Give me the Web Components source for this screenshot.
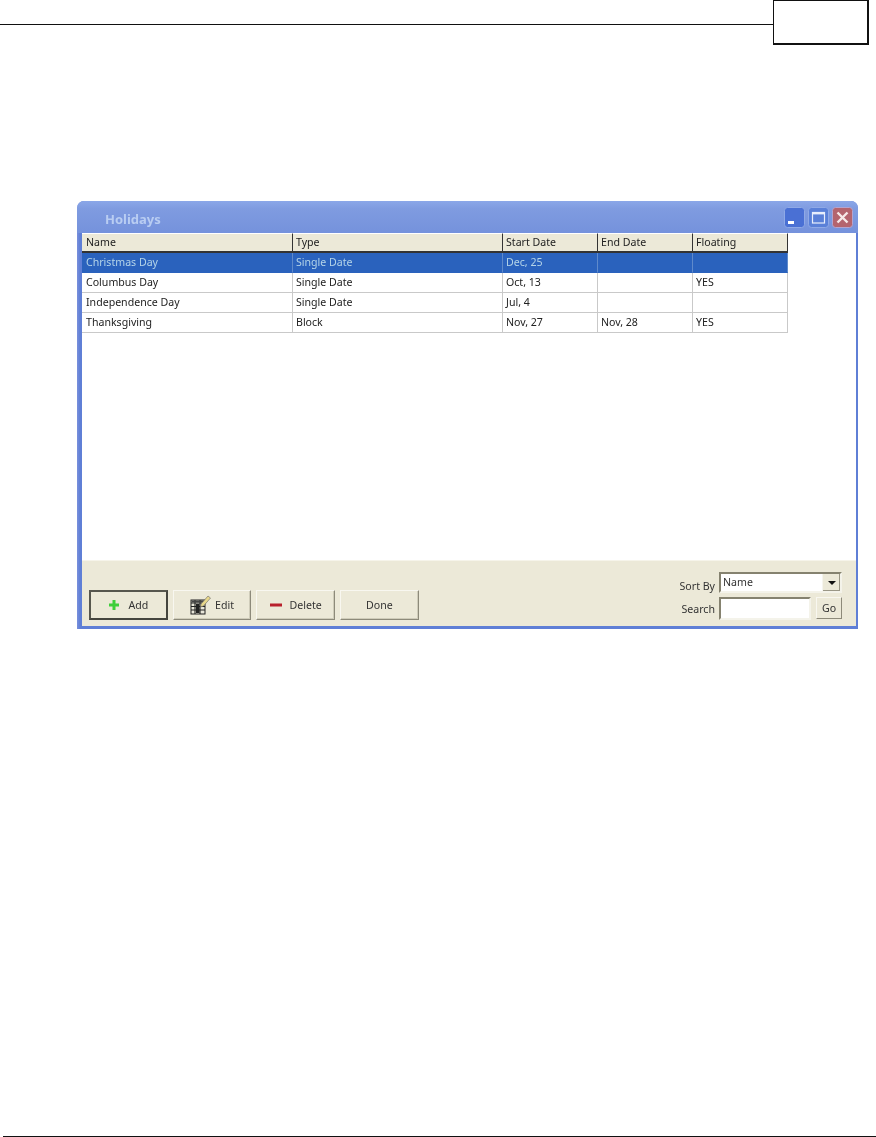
<!DOCTYPE html>
<html><head><meta charset="utf-8"><title>Holidays</title>
<style>
html,body{margin:0;padding:0;background:#fff}
body{width:876px;height:1137px;overflow:hidden;display:flex;flex-direction:column;font-family:"Noto Sans","Liberation Sans",sans-serif}
xp-window{margin:157px 0 0 77px}
page-footer{margin-top:auto}
</style></head><body>
<page-header></page-header>
<xp-window title="Holidays">
  <holiday-table></holiday-table>
  <tool-bar></tool-bar>
</xp-window>
<page-footer></page-footer>
<script>
const def=(name,html,init)=>customElements.define(name,class extends HTMLElement{
  constructor(){super();this.attachShadow({mode:'open'}).innerHTML=html;}
  connectedCallback(){init&&init(this)}
});
const F='10.6px "Noto Sans","Liberation Sans",sans-serif';
def('page-header',`<style>
:host{display:flex;height:44px;align-items:flex-start;flex:none}
.l{width:773px;height:25px;border-bottom:1px solid #111;box-sizing:border-box}
.b{width:96px;height:45px;box-sizing:border-box;border:1px solid #111;border-width:1px 2px 2px 1.5px}
</style><div class="l"></div><div class="b"></div>`);
def('page-footer',`<style>
:host{display:block;height:1px;margin-left:3px;background:#111;flex:none}
</style>`);
def('xp-window',`<style>
:host{display:block;width:781px;height:428px;box-sizing:border-box;flex:none;background:linear-gradient(90deg,#7a90dc,#5f7fd6 3px);border-radius:7px 7px 0 0;padding:0 2px 3px 5px;font:${F};filter:blur(.3px)}
.t{height:32px;box-sizing:border-box;display:flex;align-items:center;justify-content:space-between;padding:0 5px 0 28px;margin:0 -2px 0 -5px;border-radius:7px 7px 0 0;background:linear-gradient(#8ba7e8 0,#7f9be0 25%,#7592dc 100%)}
.n{font:bold 13px "Noto Sans","Liberation Sans",sans-serif;color:#b9cdf2;padding-top:4px}
.c{display:flex;gap:3px;margin-top:1px}
.c svg{display:block}
.body{height:393px;display:flex;flex-direction:column;background:#ece9d8}
</style>
<div class="t"><span class="n"></span><div class="c">
<svg width="21" height="21" viewBox="0 0 21 21"><rect x=".5" y=".5" width="20" height="20" rx="3" fill="#4a70d4" stroke="#8fa9e6"/><rect x="4" y="14" width="6" height="3" fill="#fff"/></svg>
<svg width="21" height="21" viewBox="0 0 21 21"><rect x=".5" y=".5" width="20" height="20" rx="3" fill="#5a80d8" stroke="#8fa9e6"/><rect x="4.500" y="5.500" width="12" height="10.500" fill="none" stroke="#e8eefc" stroke-width="1.200"/><rect x="4" y="5" width="13" height="2.400" fill="#e8eefc"/></svg>
<svg width="21" height="21" viewBox="0 0 21 21"><rect x=".5" y=".5" width="20" height="20" rx="3" fill="#b4646e" stroke="#b3a4cf"/><path d="M5.500 5.500 15.500 15.500M15.500 5.500 5.500 15.500" stroke="#f6e8e8" stroke-width="2.400"/></svg>
</div></div><div class="body"><slot></slot></div>`,el=>{el.shadowRoot.querySelector('.n').textContent=el.getAttribute('title')});
def('holiday-table',`<style>
:host{display:block;height:328px;flex:none;background:#fff;box-sizing:border-box;border-bottom:1px solid #f6f4ea;font:${F};color:#222}
.g{display:grid;grid-template-columns:211px 210px 95px 95px 95px;grid-auto-rows:20px;width:706px}
.h,.d{padding-left:3px;box-sizing:border-box;white-space:nowrap;display:flex;align-items:center;line-height:1}
.h{background:#ece9d8;border-right:1px solid #333;border-bottom:2px solid #333;border-top:1px solid #fff}
.d{border-right:1px solid #c9c9c9;border-bottom:1px solid #c9c9c9}
.g>:nth-child(5n+1){padding-left:4px}
.s{background:#2a62bd;color:#b4d4e8;border-right-color:#5f8acb;border-bottom-color:#2a62bd}
</style><div class="g" id="g"></div>`,el=>{
 const g=el.shadowRoot.getElementById('g');
 const H=['Name','Type','Start Date','End Date','Floating'];
 const R=[['Christmas Day','Single Date','Dec, 25','',''],['Columbus Day','Single Date','Oct, 13','','YES'],['Independence Day','Single Date','Jul, 4','',''],['Thanksgiving','Block','Nov, 27','Nov, 28','YES']];
 const add=(t,c)=>{const d=document.createElement('div');d.className=c;d.textContent=t;g.append(d)};
 H.forEach(t=>add(t,'h'));
 R.forEach((r,i)=>r.forEach(t=>add(t,i?'d':'d s')));
});
def('xp-button',`<style>
:host{display:inline-flex;align-items:center;justify-content:center;gap:var(--g,8px);width:78.7px;height:30px;box-sizing:border-box;background:#ece9d8;border:1px solid;border-color:#f8f7f0 #8d8a7a #8d8a7a #f8f7f0;box-shadow:inset -1px -1px 0 #cfccba;font:${F};color:#333;flex:none}
:host([default]){border:2px solid;border-color:#57574e #45453e #45453e #57574e;box-shadow:none}
</style><slot name="icon"></slot><slot></slot>`);
def('tool-bar',`<style>
:host{display:flex;justify-content:space-between;align-items:flex-start;flex:1;padding:0 15px 0 7px;font:${F};color:#333}
.btns{display:flex;gap:5px;margin-top:29px}
.f{display:grid;grid-template-columns:auto 92px 26px;column-gap:4px;row-gap:4px;margin-top:11px}
.f span{line-height:13px;text-align:right;align-self:end}
.a{padding-bottom:0}.b{padding-bottom:4px}
.sel{grid-column:2/4;height:21px;box-sizing:border-box;background:#fff;border:2px solid;border-color:#85826f #f4f3ea #f4f3ea #85826f;display:flex;justify-content:space-between;align-items:flex-start;padding-left:2px;line-height:13px;margin-right:-1px}
.sel b{font-weight:400;padding-top:2px}
.arrow{width:17px;height:17px;background:#ece9d8;border-left:1px solid #f6f5ee;box-shadow:inset -1px -1px 0 #9a9786;display:flex;align-items:center;justify-content:center}
.arrow i{border:4px solid transparent;border-top:4px solid #111;border-bottom:0;display:block}
.inp{height:23px;box-sizing:border-box;background:#fff;border:2px solid;border-color:#85826f #f4f3ea #f4f3ea #85826f}
.go{height:22px;box-sizing:border-box;background:#ece9d8;border:1px solid;border-color:#f8f7f0 #8d8a7a #8d8a7a #f8f7f0;display:flex;align-items:center;justify-content:center;margin-left:1px;margin-right:-1px}
svg{display:block}
</style>
<div class="btns">
<xp-button default><svg slot="icon" width="12" height="12" viewBox="0 0 12 12"><path d="M4.500 1h3v3.500H11v3H7.500V11h-3V7.500H1v-3h3.500z" fill="#3ecf3a"/></svg>Add</xp-button>
<xp-button style="--g:4px"><svg slot="icon" width="21" height="20" viewBox="0 0 21 20"><rect x="1" y="5" width="14" height="14" fill="#e8e6da" stroke="#222"/><path d="M1 8h14M5 5v14M10 5v14M1 11.500h14M1 15h14" stroke="#222" stroke-width="1.100"/><rect x="6" y="9" width="3.500" height="9" fill="#222"/><rect x="1.500" y="5.500" width="13" height="2" fill="#444"/><path d="M11 9l7-8 2.500 2-7 8-3 1z" fill="#e8d78a" stroke="#666" stroke-width=".6"/></svg>Edit</xp-button>
<xp-button><svg slot="icon" width="12" height="4" viewBox="0 0 12 4"><rect width="12" height="3" y=".5" fill="#b8202c"/></svg>Delete</xp-button>
<xp-button>Done</xp-button>
</div>
<div class="f"><span class="a">Sort By</span><div class="sel"><b>Name</b><div class="arrow"><i></i></div></div>
<span class="b">Search</span><div class="inp"></div><div class="go">Go</div></div>`);
</script></body></html>
